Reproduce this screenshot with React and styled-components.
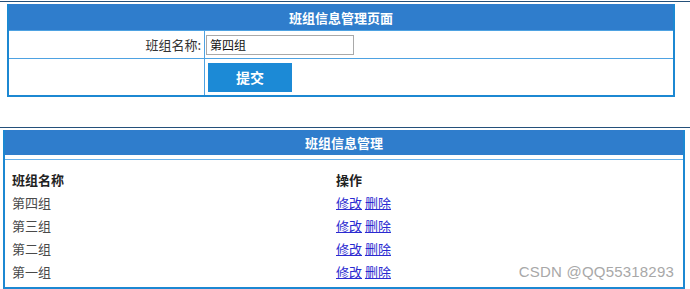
import React from "react";
import styled, { createGlobalStyle } from "styled-components";

const GlobalStyle = createGlobalStyle`
  body {
    margin: 0;
    background: #ffffff;
    font-family: "Noto Sans CJK SC", "Noto Sans", sans-serif;
    font-size: 13px;
    color: #333333;
  }
`;

const rows = ["第四组", "第三组", "第二组", "第一组"];

const App = () => {
  return (
    <StPage>
      <GlobalStyle />
      <StTopLine />
      <StFormPanel>
        <StHeader height={26}>班组信息管理页面</StHeader>
        <StFormRow height={28}>
          <StLabelCell>班组名称:</StLabelCell>
          <StFieldCell>
            <StInput defaultValue="第四组" />
          </StFieldCell>
        </StFormRow>
        <StFormRow height={37}>
          <StLabelCell />
          <StFieldCell>
            <StSubmit>提交</StSubmit>
          </StFieldCell>
        </StFormRow>
      </StFormPanel>

      <StTopLine spaced />
      <StListPanel>
        <StHeader height={25}>班组信息管理</StHeader>
        <StDivider />
        <StTable>
          <StRow head>
            <StNameCell>班组名称</StNameCell>
            <span>操作</span>
          </StRow>
          {rows.map((name) => (
            <StRow key={name}>
              <StNameCell>{name}</StNameCell>
              <span>
                <StLink href="#">修改</StLink> <StLink href="#">删除</StLink>
              </span>
            </StRow>
          ))}
        </StTable>
        <StWatermark>CSDN @QQ55318293</StWatermark>
      </StListPanel>
    </StPage>
  );
};

export default App;

const StPage = styled.div`
  width: 690px;
  height: 289px;
  overflow: hidden;
  padding-top: 1px;
  box-sizing: border-box;
`;

const StTopLine = styled.div`
  height: 1px;
  background-color: #24507a;
  margin-top: ${(props) => (props.spaced ? "30px" : "0")};
  margin-bottom: 2px;
`;

const StFormPanel = styled.div`
  margin-left: 7px;
  width: 668px;
  box-sizing: border-box;
  border: 2px solid #1c88d2;
  border-top: none;
`;

const StHeader = styled.div`
  height: ${(props) => props.height}px;
  background-color: #2f7dcc;
  color: #ffffff;
  font-weight: 700;
  font-size: 13px;
  display: flex;
  align-items: center;
  justify-content: center;
`;

const StFormRow = styled.div`
  display: flex;
  height: ${(props) => props.height}px;
  border-top: 1px solid #4ea2e2;
  box-sizing: border-box;
`;

const StLabelCell = styled.div`
  width: 192px;
  border-right: 1px solid #4ea2e2;
  display: flex;
  align-items: center;
  justify-content: flex-end;
  padding-right: 3px;
  font-size: 13px;
`;

const StFieldCell = styled.div`
  flex: 1;
  display: flex;
  align-items: center;
  padding-left: 1px;
`;

const StInput = styled.input`
  width: 148px;
  height: 20px;
  box-sizing: border-box;
  border: 1px solid #a9a9a9;
  font-family: "Noto Sans CJK SC", sans-serif;
  font-size: 12px;
  color: #111111;
  padding: 0 3px;
  &:focus {
    outline: none;
  }
`;

const StSubmit = styled.button`
  margin-left: 2px;
  width: 84px;
  height: 29px;
  border: none;
  background-color: #1c8ad6;
  color: #ffffff;
  font-family: "Noto Sans CJK SC", sans-serif;
  font-weight: 700;
  font-size: 14px;
  cursor: pointer;
`;

const StListPanel = styled.div`
  position: relative;
  margin-left: 3px;
  width: 682px;
  height: 159px;
  box-sizing: border-box;
  border: 2px solid #1c88d2;
  border-top: none;
`;

const StDivider = styled.div`
  height: 1px;
  margin-top: 4px;
  background-color: #6ab2ea;
`;

const StTable = styled.div`
  padding: 8px 0 0 7px;
`;

const StRow = styled.div`
  display: flex;
  height: 23px;
  align-items: center;
  font-weight: ${(props) => (props.head ? 700 : 400)};
  color: ${(props) => (props.head ? "#222222" : "#4a4a4a")};
`;

const StNameCell = styled.span`
  width: 324px;
`;

const StLink = styled.a`
  color: #2a2ad0;
  text-decoration: underline;
`;

const StWatermark = styled.div`
  position: absolute;
  right: 9px;
  bottom: 7px;
  font-family: "Liberation Sans", sans-serif;
  font-size: 15px;
  color: #a8a8a8;
  letter-spacing: 0.2px;
`;
